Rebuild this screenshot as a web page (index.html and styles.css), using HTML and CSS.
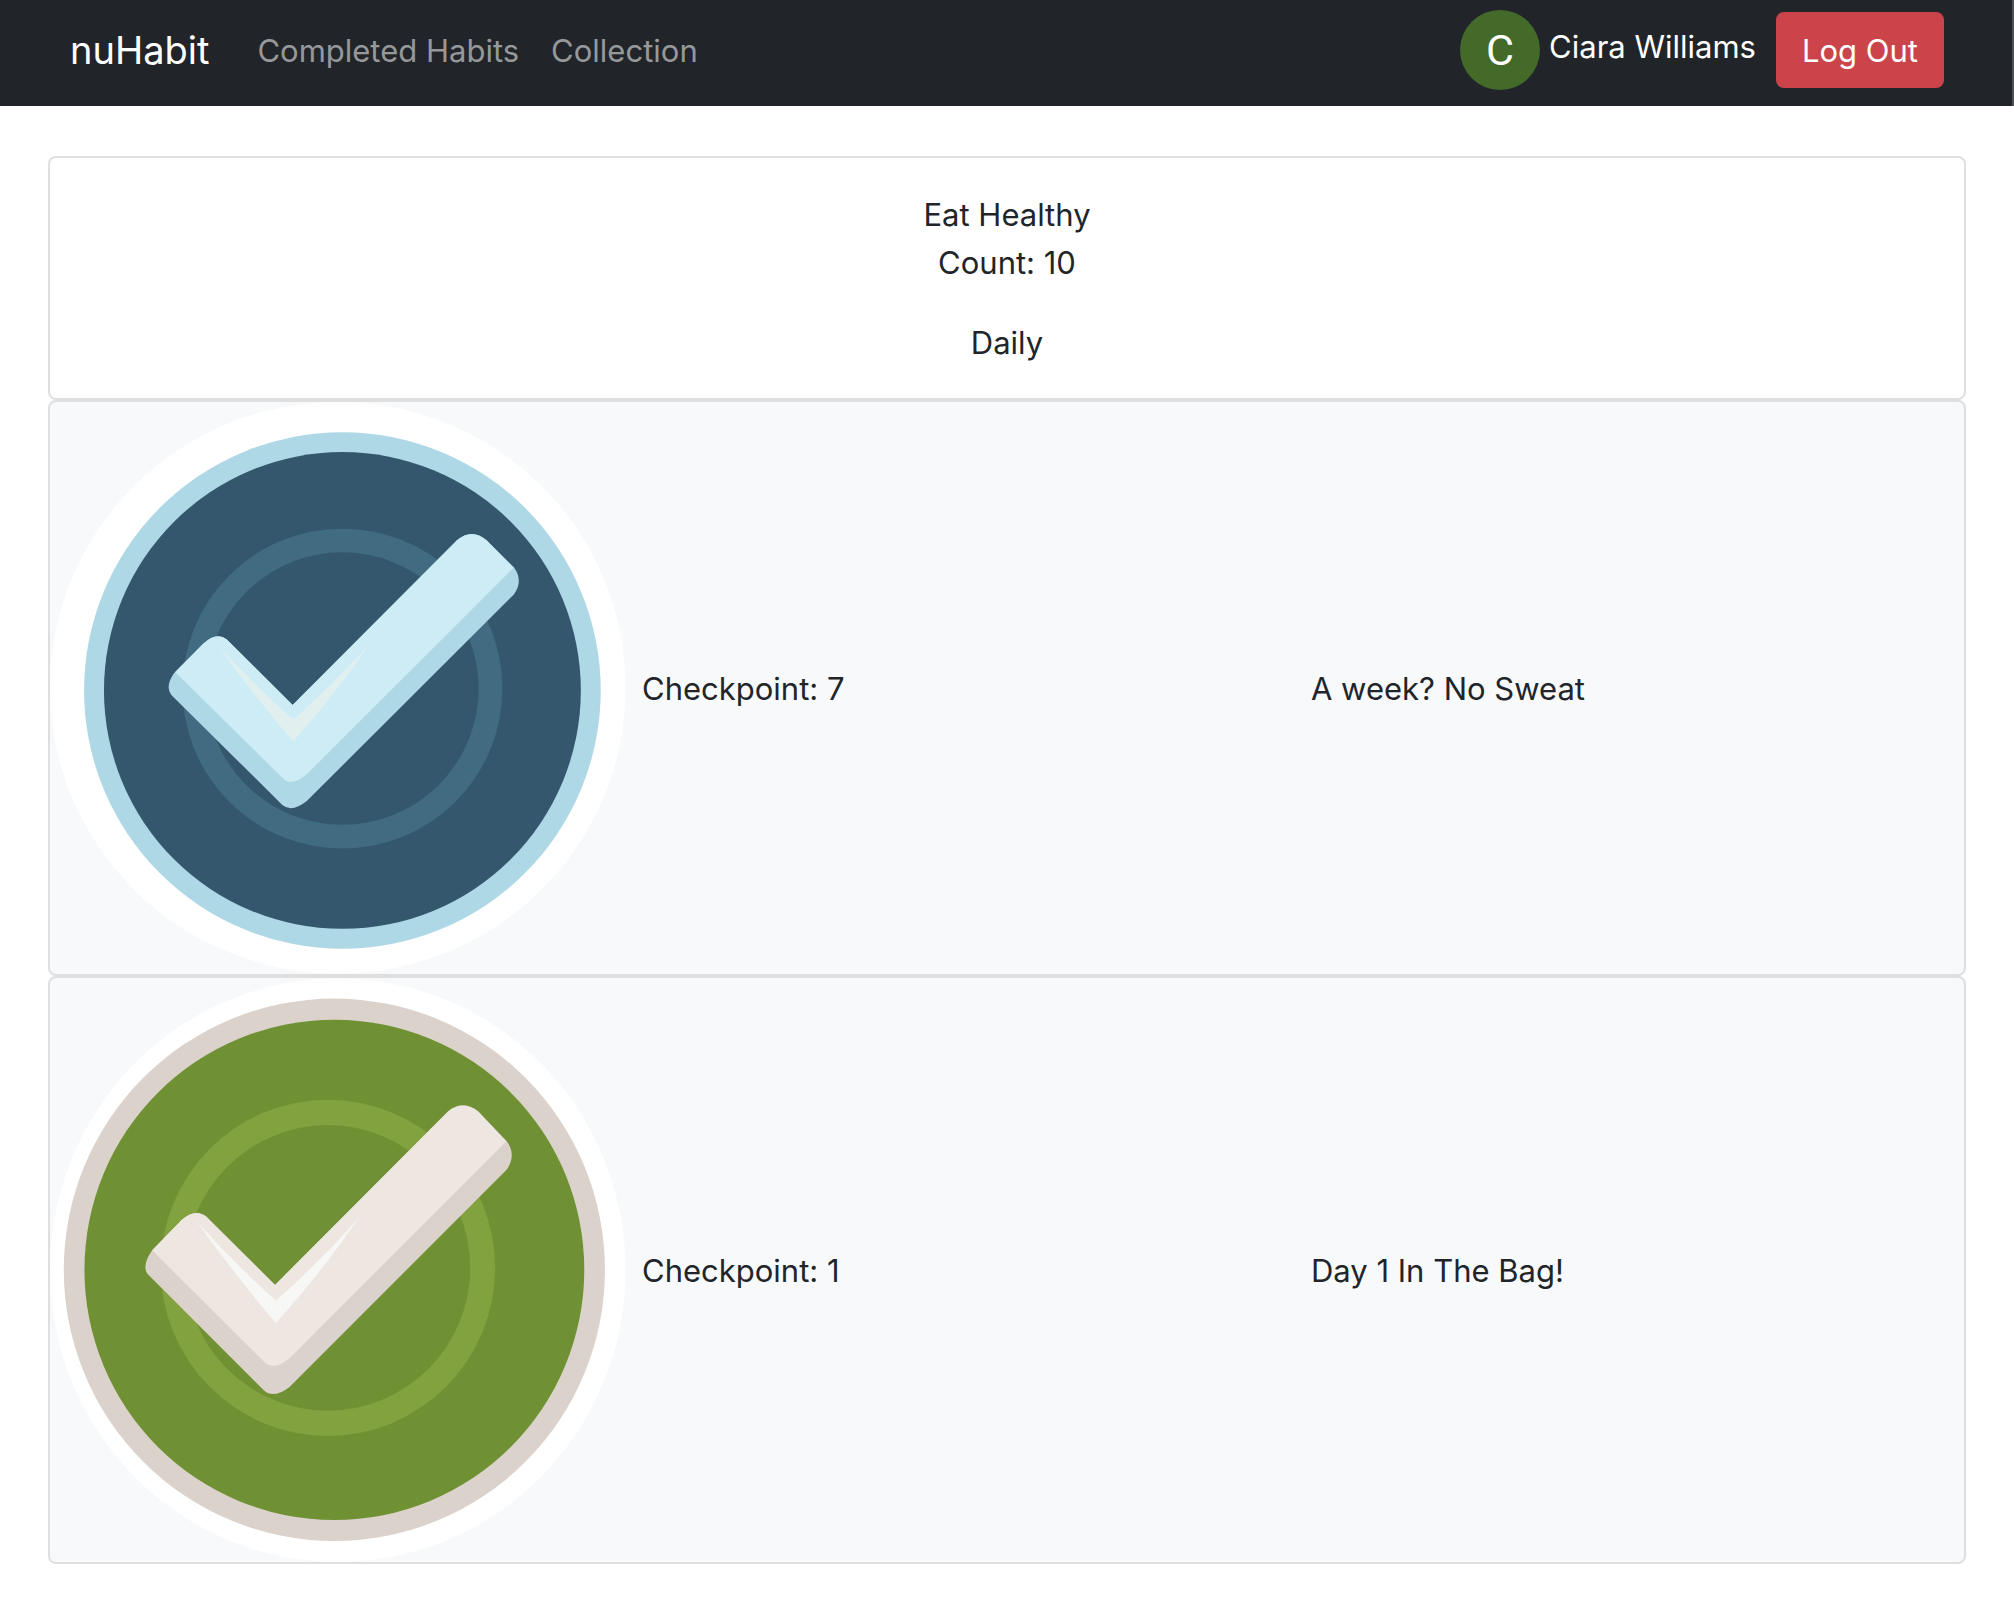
FILE: index.html
```html
<!DOCTYPE html>
<html lang="en">
<head>
  <meta charset="utf-8">
  <meta name="viewport" content="width=device-width, initial-scale=1">
  <title>nuHabit</title>
  <link rel="stylesheet" href="styles.css">
</head>
<body>
  <header class="navbar">
    <a class="brand" href="#">nuHabit</a>
    <nav class="nav-links">
      <a class="nav-link" href="#">Completed Habits</a>
      <a class="nav-link" href="#">Collection</a>
    </nav>
    <div class="user"><span class="avatar">C</span><span class="user-name">Ciara Williams</span></div>
    <button class="logout" type="button">Log Out</button>
  </header>

  <main class="content">
    <section class="card summary">
      <p class="summary-text">Eat Healthy<br>Count: 10</p>
      <p class="summary-text">Daily</p>
    </section>

    <section class="card reward">
      <div class="badge-cell">
        <svg class="badge badge-week" viewBox="26 31 1505 1495" preserveAspectRatio="none" role="img" aria-label="Blue check mark badge">
          <ellipse cx="778" cy="778" rx="752" ry="747" fill="#fff"/>
          <circle cx="790" cy="785" r="675" fill="#afd8e6"/>
          <circle cx="790" cy="785" r="623" fill="#34576d"/>
          <circle cx="790" cy="780" r="387" fill="none" stroke="#416b80" stroke-width="62"/>
          <path fill="#afd8e6" d="M350 740L427 662Q462 630 488 652L660 823L1090 392Q1128 360 1166 392L1238 463Q1264 498 1238 534L697 1074Q658 1105 633 1084L343 797Q326 775 350 740Z"/>
          <path fill="#cdecf6" d="M353 737L427 662Q462 630 488 652L660 823L1090 392Q1128 360 1166 392L1237 464L697 1004Q655 1039 634 1014Z"/>
          <path fill="#e1efef" d="M468 670Q560 772 662 861Q770 765 862 663Q775 790 662 918Q550 790 468 670Z"/>
        </svg>
      </div>
      <div class="reward-text">Checkpoint: 7</div>
      <div class="reward-text">A week? No Sweat</div>
    </section>

    <section class="card reward">
      <div class="badge-cell">
        <svg class="badge badge-day" viewBox="26 33 1505 1501" preserveAspectRatio="none" role="img" aria-label="Green check mark badge">
          <ellipse cx="778" cy="784" rx="752" ry="750" fill="#fff"/>
          <ellipse cx="769" cy="783" rx="707" ry="697" fill="#dbd2cc"/>
          <ellipse cx="769" cy="783" rx="653" ry="643" fill="#6f9134"/>
          <ellipse cx="752" cy="778" rx="437" ry="432" fill="#82a23f"/>
          <ellipse cx="752" cy="778" rx="372" ry="367" fill="#6f9134"/>
          <path fill="#dbd2cc" d="M293 733L370 655Q405 624 434 646L614 822L1066 376Q1104 346 1145 376L1219 452Q1246 488 1219 526L652 1084Q611 1115 586 1094L281 794Q265 772 293 733Z"/>
          <path fill="#eee6e1" d="M293 733L370 655Q405 624 434 646L614 822L1066 376Q1104 346 1145 376L1218 453L652 1010Q610 1044 586 1020Z"/>
          <path fill="#f7f7f5" d="M408 656Q510 770 616 862Q730 765 832 650Q740 785 616 920Q500 785 408 656Z"/>
        </svg>
      </div>
      <div class="reward-text">Checkpoint: 1</div>
      <div class="reward-text">Day 1 In The Bag!</div>
    </section>
  </main>
</body>
</html>
```
FILE: styles.css
```css
* {
  box-sizing: border-box;
}

body {
  margin: 0;
  background: #fff;
  color: #212529;
  font-family: Inter, "Liberation Sans", sans-serif;
  font-size: 31px;
  line-height: 48px;
}

.navbar {
  display: flex;
  align-items: center;
  padding: 10px 68px 16px 70px;
  background: #212529;
  border-right: 2px solid #505357;
}

.brand {
  margin-right: 48px;
  color: #fff;
  font-size: 38px;
  text-decoration: none;
}

.nav-links {
  display: flex;
  flex: 1;
  gap: 32px;
  padding-top: 2px;
}

.nav-link {
  color: #979899;
  text-decoration: none;
}

.user {
  margin-right: 20px;
  color: #fff;
  white-space: nowrap;
}

.avatar {
  display: inline-block;
  width: 80px;
  height: 80px;
  margin-right: 9px;
  border-radius: 50%;
  background: #436a29;
  font-family: Roboto, sans-serif;
  font-size: 43px;
  line-height: 80px;
  text-align: center;
  vertical-align: middle;
}

.logout {
  padding: 13px 24px 11px;
  border: 2px solid #cb444a;
  border-radius: 8px;
  background: #cb444a;
  color: #fff;
  font: inherit;
  white-space: nowrap;
}

.content {
  padding: 50px 48px;
}

.card {
  border: 2px solid #dfdfdf;
  border-radius: 8px;
}

.summary {
  padding: 33px 32px 31px;
  text-align: center;
}

.summary-text {
  margin: 0 0 32px;
}

.summary-text:last-child {
  margin-bottom: 0;
}

.reward {
  display: grid;
  grid-template-columns: 592fr 669fr 653fr;
  align-items: center;
  background: #f8f9fb;
}

.reward-text {
  padding-top: 2px;
}

.badge-cell {
  padding-right: 16px;
}

.badge {
  display: block;
  width: 100%;
}

.badge-week {
  aspect-ratio: 576 / 572;
}

.badge-day {
  aspect-ratio: 576 / 584;
}
```
